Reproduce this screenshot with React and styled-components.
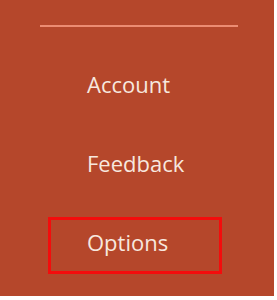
import React from "react";
import styled, { createGlobalStyle } from "styled-components";

const Global = createGlobalStyle`
  html, body { margin: 0; padding: 0; background: #ffffff; }
  body { font-family: "Open Sans", "Noto Sans", sans-serif; }
`;

const Panel = styled.nav`
  width: 274px;
  height: 296px;
  background: #b5472b;
  box-sizing: border-box;
  padding-top: 25px;
  display: flex;
  flex-direction: column;
`;

const Divider = styled.div`
  margin-left: 40px;
  width: 198px;
  height: 2px;
  background: #ec8c72;
`;

const List = styled.ul`
  list-style: none;
  margin: 32px 0 0 0;
  padding: 0;
  display: flex;
  flex-direction: column;
  gap: 22px;
`;

const Item = styled.li`
  margin-left: 48px;
  width: 174px;
  height: 57px;
  box-sizing: border-box;
  border: 3px solid ${(p) => (p.$highlight ? "#f40c0c" : "transparent")};
  padding-left: 36px;
  display: flex;
  align-items: center;
  color: #f7e8df;
  font-size: 22px;
  line-height: 1;
  padding-bottom: 8px;
`;

export default function App() {
  return (
    <>
      <Global />
      <Panel>
        <Divider />
        <List>
          <Item>Account</Item>
          <Item>Feedback</Item>
          <Item $highlight>Options</Item>
        </List>
      </Panel>
    </>
  );
}
